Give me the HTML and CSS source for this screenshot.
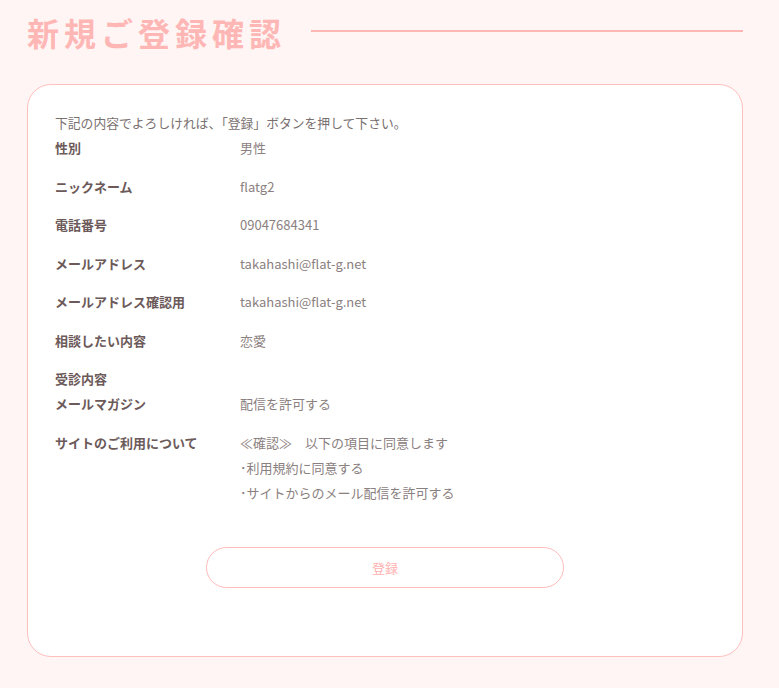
FILE: index.html
```html
<!DOCTYPE html>
<html lang="ja">
<head>
<meta charset="utf-8">
<title>新規ご登録確認</title>
<link rel="stylesheet" href="styles.css">
</head>
<body>
<div class="page">
  <header class="page-head">
    <h1 class="page-title">新規ご登録確認</h1>
    <span class="page-rule"></span>
  </header>
  <section class="card">
    <p class="intro">下記の内容でよろしければ、「登録」ボタンを押して下さい。</p>
    <dl class="confirm">
      <div class="row"><dt>性別</dt><dd>男性</dd></div>
      <div class="row"><dt>ニックネーム</dt><dd>flatg2</dd></div>
      <div class="row"><dt>電話番号</dt><dd>09047684341</dd></div>
      <div class="row"><dt>メールアドレス</dt><dd>takahashi@flat-g.net</dd></div>
      <div class="row"><dt>メールアドレス確認用</dt><dd>takahashi@flat-g.net</dd></div>
      <div class="row"><dt>相談したい内容</dt><dd>恋愛</dd></div>
      <div class="row row-empty"><dt>受診内容</dt><dd></dd></div>
      <div class="row"><dt>メールマガジン</dt><dd>配信を許可する</dd></div>
      <div class="row"><dt>サイトのご利用について</dt><dd>≪確認≫　以下の項目に同意します<br>･利用規約に同意する<br>･サイトからのメール配信を許可する</dd></div>
    </dl>
    <div class="actions">
      <button class="submit" type="button">登録</button>
    </div>
  </section>
</div>
</body>
</html>
```

FILE: styles.css
```css
html, body {
  margin: 0;
  padding: 0;
  background: #fff5f4;
}
body {
  font-family: "Noto Sans CJK JP", "Noto Sans", sans-serif;
  color: #7d7272;
}
.page {
  padding: 0 36px 0 27px;
}
.page-head {
  display: flex;
  align-items: center;
  height: 64px;
  margin-bottom: 20px;
}
.page-title {
  margin: 0;
  font-size: 32px;
  font-weight: 700;
  letter-spacing: 5px;
  color: #ffb7b5;
  line-height: 1;
}
.page-rule {
  flex: 1;
  height: 2px;
  background: #ffb7b5;
  margin-left: 25px;
  margin-top: -2px;
}
.card {
  background: #fff;
  border: 1px solid #ffbfbd;
  border-radius: 24px;
  padding: 25px 27px 68px;
}
.intro {
  margin: 0;
  font-size: 12.8px;
  line-height: 25px;
  color: #7a7070;
}
.confirm {
  margin: 0;
  display: flex;
  flex-direction: column;
  gap: 13.5px;
}
.row {
  display: grid;
  grid-template-columns: 185px 1fr;
  font-size: 13px;
  line-height: 25px;
}
.row-empty {
  margin-bottom: -13.5px;
}
.row dt {
  font-weight: 700;
  color: #6c5a5a;
}
.row dd {
  margin: 0;
  color: #8b8080;
}
.actions {
  display: flex;
  justify-content: center;
  margin-top: 42px;
}
.submit {
  width: 358px;
  height: 41px;
  background: #fff;
  border: 1px solid #ffbcba;
  border-radius: 21px;
  color: #ffb0ae;
  font-family: "Noto Sans CJK JP", sans-serif;
  font-size: 13px;
}
```
